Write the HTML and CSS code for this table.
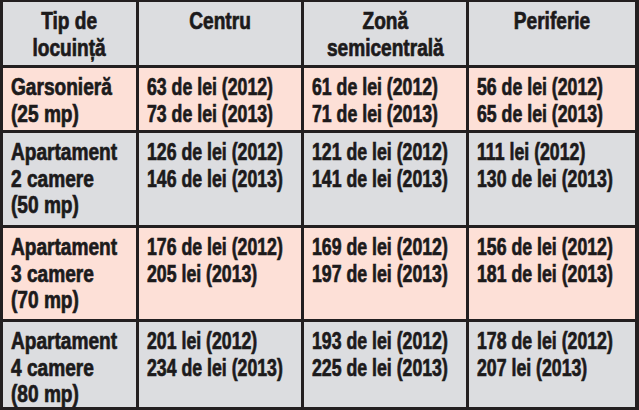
FILE: index.html
```html
<!DOCTYPE html>
<html lang="ro">
<head>
<meta charset="utf-8">
<link rel="stylesheet" href="styles.css">
</head>
<body>
<div class="table">
  <div class="cell head"><span class="txt">Tip de<br>locuință</span></div>
  <div class="cell head"><span class="txt">Centru</span></div>
  <div class="cell head"><span class="txt">Zonă<br>semicentrală</span></div>
  <div class="cell head"><span class="txt">Periferie</span></div>

  <div class="cell pink label"><span class="txt">Garsonieră<br>(25 mp)</span></div>
  <div class="cell pink"><span class="txt">63 de lei (2012)<br>73 de lei (2013)</span></div>
  <div class="cell pink"><span class="txt">61 de lei (2012)<br>71 de lei (2013)</span></div>
  <div class="cell pink"><span class="txt">56 de lei (2012)<br>65 de lei (2013)</span></div>

  <div class="cell grey label"><span class="txt">Apartament<br>2 camere<br>(50 mp)</span></div>
  <div class="cell grey"><span class="txt">126 de lei (2012)<br>146 de lei (2013)</span></div>
  <div class="cell grey"><span class="txt">121 de lei (2012)<br>141 de lei (2013)</span></div>
  <div class="cell grey"><span class="txt">111 lei (2012)<br>130 de lei (2013)</span></div>

  <div class="cell pink label"><span class="txt">Apartament<br>3 camere<br>(70 mp)</span></div>
  <div class="cell pink"><span class="txt">176 de lei (2012)<br>205 lei (2013)</span></div>
  <div class="cell pink"><span class="txt">169 de lei (2012)<br>197 de lei (2013)</span></div>
  <div class="cell pink"><span class="txt">156 de lei (2012)<br>181 de lei (2013)</span></div>

  <div class="cell grey label"><span class="txt">Apartament<br>4 camere<br>(80 mp)</span></div>
  <div class="cell grey"><span class="txt">201 lei (2012)<br>234 de lei (2013)</span></div>
  <div class="cell grey"><span class="txt">193 de lei (2012)<br>225 de lei (2013)</span></div>
  <div class="cell grey"><span class="txt">178 de lei (2012)<br>207 lei (2013)</span></div>
</div>
</body>
</html>
```
FILE: styles.css
```css
html, body {
  margin: 0;
  padding: 0;
  background: #231f20;
}
.table {
  display: grid;
  grid-template-columns: 133px 162px 162px 166px;
  grid-template-rows: 63px 62px 92px 91px 85px;
  gap: 3px;
  padding: 2px 4px 3px 3px;
  width: 639px;
  height: 410px;
  box-sizing: border-box;
  background: #231f20;
  font-family: "Liberation Sans", Arial, sans-serif;
  font-weight: bold;
  font-size: 23px;
  line-height: 26.5px;
  color: #1c1a1b;
  -webkit-text-stroke: 0.7px #1c1a1b;
}
.cell {
  padding: 6px 7px 0 8px;
  overflow: hidden;
  white-space: nowrap;
}
.txt {
  display: inline-block;
  transform: scaleX(0.77);
  transform-origin: left top;
}
.label .txt {
  transform: scaleX(0.83);
}
.head {
  background: #dcdde0;
  text-align: center;
  padding-left: 0;
  padding-right: 0;
}
.head .txt {
  transform: scaleX(0.83);
  transform-origin: center top;
}
.grey {
  background: #dcdde0;
}
.pink {
  background: #fde0d7;
}
```
